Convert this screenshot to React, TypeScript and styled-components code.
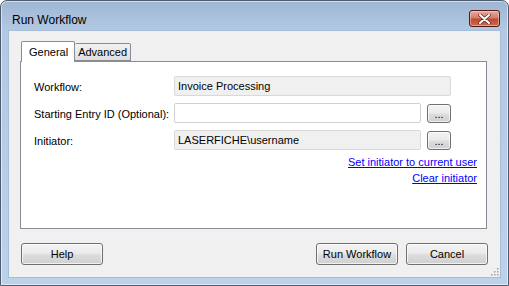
import styled, { createGlobalStyle } from "styled-components";

const GlobalStyle = createGlobalStyle`
  html, body {
    margin: 0;
    padding: 0;
    background: #ffffff;
  }
  body {
    font-family: "Liberation Sans", Arial, sans-serif;
    font-size: 11px;
    color: #000000;
  }
`;

const Window = styled.div`
  width: 509px;
  height: 286px;
  box-sizing: border-box;
  border: 1px solid #4d5c6e;
  border-radius: 7px 7px 0 0;
  background: linear-gradient(to bottom, #9fb6d3 0px, #b3c9e3 30px, #bcd2ea 100%);
  padding: 0 7px 7px 7px;
  display: flex;
  flex-direction: column;
  box-shadow: inset 0 0 0 1px rgba(255, 255, 255, 0.55);
`;

const TitleBar = styled.div`
  height: 29px;
  display: flex;
  align-items: flex-start;
  justify-content: space-between;
`;

const Title = styled.div`
  font-size: 12px;
  padding: 12px 0 0 4px;
  color: #000000;
  line-height: 14px;
`;

const CloseButton = styled.div`
  width: 31px;
  height: 17px;
  margin: 9px 1px 0 0;
  box-sizing: border-box;
  border: 1px solid #4e1b14;
  border-radius: 3px;
  background: linear-gradient(to bottom, #e8a99c 0%, #d47e6c 45%, #c2492f 55%, #cc6a4f 100%);
  box-shadow: inset 0 0 0 1px rgba(255, 220, 210, 0.5);
  display: flex;
  align-items: center;
  justify-content: center;
`;

const Client = styled.div`
  flex: 1;
  background: #f0f0f0;
  border: 1px solid #a7bcd6;
  padding: 10px 13px 0 11px;
  display: flex;
  flex-direction: column;
  position: relative;
`;

const TabStrip = styled.div`
  display: flex;
  align-items: flex-end;
  height: 20px;
  padding-left: 1px;
`;

const Tab = styled.div<{ $active?: boolean }>`
  box-sizing: border-box;
  height: ${(p) => (p.$active ? "21px" : "18px")};
  padding: ${(p) => (p.$active ? "4px 6px 0 7px" : "2px 3px 0 3px")};
  border: 1px solid #898c95;
  border-bottom: ${(p) => (p.$active ? "none" : "1px solid #898c95")};
  border-left: ${(p) => (p.$active ? "1px solid #898c95" : "none")};
  border-radius: 2px 2px 0 0;
  background: ${(p) =>
    p.$active ? "#ffffff" : "linear-gradient(to bottom, #f2f2f2, #dedede)"};
  font-size: 11px;
  line-height: 13px;
  margin-bottom: ${(p) => (p.$active ? "-1px" : "0")};
  position: relative;
  z-index: ${(p) => (p.$active ? 1 : 0)};
`;

const Panel = styled.div`
  height: 168px;
  box-sizing: border-box;
  background: #ffffff;
  border: 1px solid #898c95;
  padding: 14px 9px 0 13px;
  display: flex;
  flex-direction: column;
`;

const FormGrid = styled.div`
  display: grid;
  grid-template-columns: 134px 247px 24px;
  column-gap: 6px;
  row-gap: 7px;
  align-items: center;
`;

const Label = styled.div`
  font-size: 11px;
  line-height: 13px;
  padding-top: 3px;
  white-space: nowrap;
`;

const Field = styled.div<{ $readOnly?: boolean; $wide?: boolean }>`
  grid-column: ${(p) => (p.$wide ? "2 / span 2" : "auto")};
  height: 20px;
  box-sizing: border-box;
  border: 1px solid ${(p) => (p.$readOnly ? "#d9d9d9" : "#cdd1d7")};
  border-radius: 2px;
  background: ${(p) => (p.$readOnly ? "#f0f0f0" : "#ffffff")};
  font-size: 11px;
  line-height: 16px;
  padding: 1px 3px;
  white-space: nowrap;
`;

const BrowseButton = styled.div`
  width: 24px;
  height: 19px;
  box-sizing: border-box;
  border: 1px solid #707070;
  border-radius: 3px;
  background: linear-gradient(to bottom, #f3f3f3 0%, #ebebeb 45%, #dddddd 55%, #cfcfcf 100%);
  box-shadow: inset 0 0 0 1px rgba(255, 255, 255, 0.7);
  font-size: 11px;
  line-height: 18px;
  text-align: center;
  margin-top: 1px;
`;

const Links = styled.div`
  display: flex;
  flex-direction: column;
  align-items: flex-end;
  gap: 3px;
  margin-top: 6px;
`;

const Link = styled.a`
  color: #0000ff;
  text-decoration: underline;
  font-size: 11px;
  line-height: 13px;
  cursor: pointer;
`;

const ButtonBar = styled.div`
  display: flex;
  align-items: center;
  margin-top: 14px;
  padding-left: 1px;
  margin-right: -1px;
  gap: 8px;
`;

const Spacer = styled.div`
  flex: 1;
`;

const Button = styled.div`
  width: 82px;
  height: 22px;
  box-sizing: border-box;
  border: 1px solid #707070;
  border-radius: 3px;
  background: linear-gradient(to bottom, #f3f3f3 0%, #ebebeb 45%, #dddddd 55%, #cfcfcf 100%);
  box-shadow: inset 0 0 0 1px rgba(255, 255, 255, 0.7);
  font-size: 11px;
  line-height: 20px;
  text-align: center;
`;

const Grip = styled.svg`
  position: absolute;
  right: 1px;
  bottom: 1px;
`;

const App = () => {
  return (
    <>
      <GlobalStyle />
      <Window>
        <TitleBar>
          <Title>Run Workflow</Title>
          <CloseButton>
            <svg width="13" height="10" viewBox="0 0 13 10">
              <path
                d="M2 1 L11 9 M11 1 L2 9"
                stroke="#5a2a22"
                strokeWidth="3.4"
                strokeLinecap="round"
              />
              <path
                d="M2 1 L11 9 M11 1 L2 9"
                stroke="#ffffff"
                strokeWidth="2"
                strokeLinecap="round"
              />
            </svg>
          </CloseButton>
        </TitleBar>
        <Client>
          <TabStrip>
            <Tab $active>General</Tab>
            <Tab>Advanced</Tab>
          </TabStrip>
          <Panel>
            <FormGrid>
              <Label>Workflow:</Label>
              <Field $readOnly $wide>
                Invoice Processing
              </Field>
              <Label>Starting Entry ID (Optional):</Label>
              <Field />
              <BrowseButton>...</BrowseButton>
              <Label>Initiator:</Label>
              <Field $readOnly>LASERFICHE\username</Field>
              <BrowseButton>...</BrowseButton>
            </FormGrid>
            <Links>
              <Link>Set initiator to current user</Link>
              <Link>Clear initiator</Link>
            </Links>
          </Panel>
          <ButtonBar>
            <Button>Help</Button>
            <Spacer />
            <Button>Run Workflow</Button>
            <Button>Cancel</Button>
          </ButtonBar>
          <Grip width="9" height="9" viewBox="0 0 9 9">
            {[
              [7, 1],
              [7, 4],
              [4, 4],
              [7, 7],
              [4, 7],
              [1, 7],
            ].map(([x, y]) => (
              <rect key={`${x}-${y}`} x={x} y={y} width="1.5" height="1.5" fill="#a0a0a0" />
            ))}
          </Grip>
        </Client>
      </Window>
    </>
  );
};

export default App;
